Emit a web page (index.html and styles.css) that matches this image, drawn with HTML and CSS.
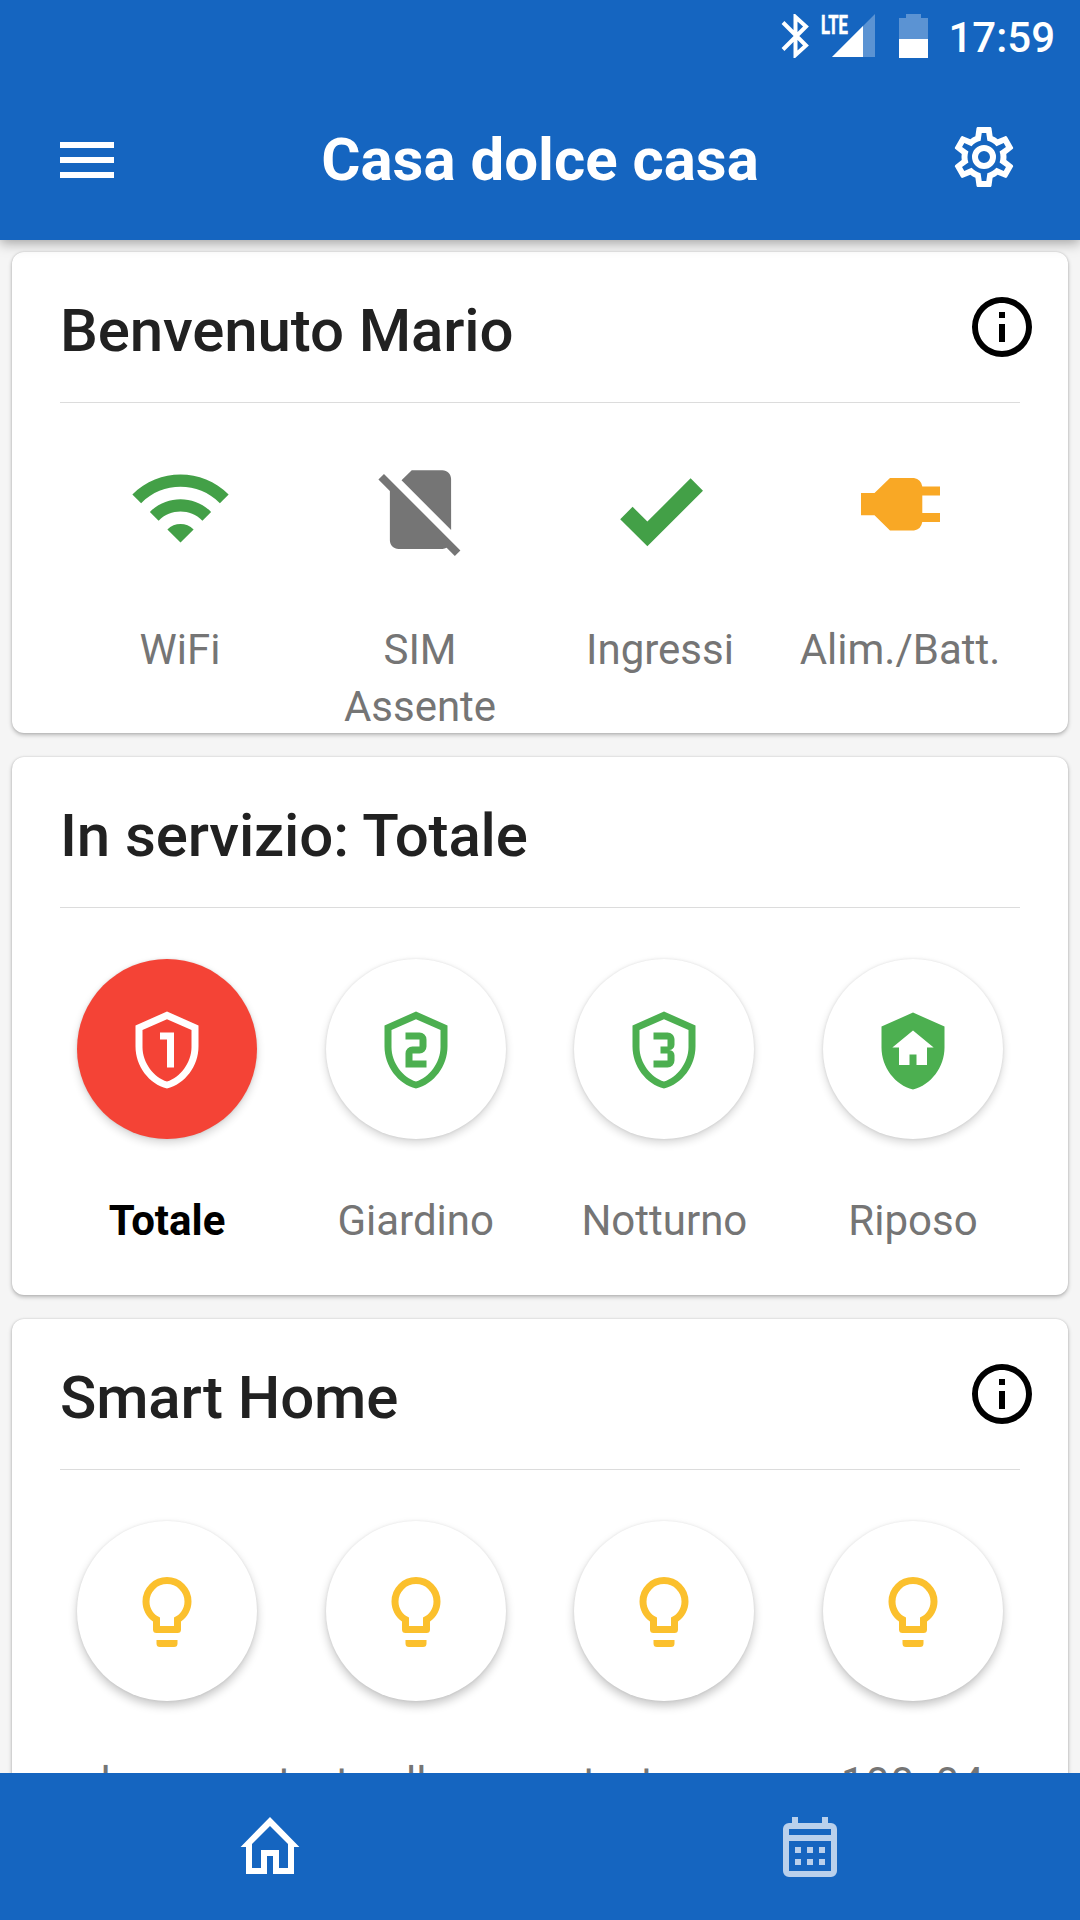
FILE: index.html
```html
<!DOCTYPE html>
<html lang="it">
<head>
<meta charset="utf-8">
<title>Casa dolce casa</title>
<link rel="stylesheet" href="styles.css">
</head>
<body>
<svg class="defs" aria-hidden="true">
  <symbol id="shield" viewBox="0 0 24 24"><path d="M21,11C21,16.55 17.16,21.74 12,23C6.84,21.74 3,16.55 3,11V5L12,1L21,5V11M12,21C15.75,20 19,15.54 19,11.22V6.3L12,3.18L5,6.3V11.22C5,15.54 8.25,20 12,21Z"/></symbol>
  <symbol id="info" viewBox="0 0 24 24"><path d="M11,9H13V7H11M12,20C7.59,20 4,16.41 4,12C4,7.59 7.59,4 12,4C16.41,4 20,7.59 20,12C20,16.41 16.41,20 12,20M12,2A10,10 0 0,0 2,12A10,10 0 0,0 12,22A10,10 0 0,0 22,12A10,10 0 0,0 12,2M11,17H13V11H11V17Z"/></symbol>
  <symbol id="bulb" viewBox="0 0 24 24"><path d="M12,2A7,7 0 0,1 19,9C19,11.38 17.81,13.47 16,14.74V17A1,1 0 0,1 15,18H9A1,1 0 0,1 8,17V14.74C6.19,13.47 5,11.38 5,9A7,7 0 0,1 12,2M9,21V20H15V21A1,1 0 0,1 14,22H10A1,1 0 0,1 9,21M12,4A5,5 0 0,0 7,9C7,11.05 8.23,12.81 10,13.58V16H14V13.58C15.77,12.81 17,11.05 17,9A5,5 0 0,0 12,4Z"/></symbol>
</svg>
<div class="screen">
  <header class="appbar">
    <div class="statusbar">
      <svg class="bluetooth" viewBox="0 0 28 44"><path d="M2 8.5L25 31.5L14.5 41V3L25 12.500L2 35.500" fill="none" stroke="#fff" stroke-width="4"/></svg>
      <div class="signal">
        <span class="lte">LTE</span>
        <svg class="wedge" viewBox="0 0 43 43"><path d="M43 0V43H0Z" fill="#fff" opacity=".3"/><path d="M31 12V43H0Z" fill="#fff"/></svg>
      </div>
      <svg class="battery" viewBox="0 0 29 44"><path d="M7 0H22V4H29V25H0V4H7Z" fill="#fff" opacity=".3"/><path d="M0 25H29V44H0Z" fill="#fff"/></svg>
      <span class="clock">17:59</span>
    </div>
    <div class="toolbar">
      <svg class="icon menu" viewBox="0 0 24 24"><path d="M3,6H21V8H3V6M3,11H21V13H3V11M3,16H21V18H3V16Z"/></svg>
      <h1 class="apptitle">Casa dolce casa</h1>
      <svg class="icon gear" viewBox="0 0 24 24"><path d="M12,8A4,4 0 0,1 16,12A4,4 0 0,1 12,16A4,4 0 0,1 8,12A4,4 0 0,1 12,8M12,10A2,2 0 0,0 10,12A2,2 0 0,0 12,14A2,2 0 0,0 14,12A2,2 0 0,0 12,10M10,22C9.75,22 9.54,21.82 9.5,21.58L9.13,18.93C8.5,18.68 7.96,18.34 7.44,17.94L4.95,18.95C4.73,19.03 4.46,18.95 4.34,18.73L2.34,15.27C2.21,15.05 2.27,14.78 2.46,14.63L4.57,12.97L4.5,12L4.57,11L2.46,9.37C2.27,9.22 2.21,8.95 2.34,8.73L4.34,5.27C4.46,5.05 4.73,4.96 4.95,5.05L7.44,6.05C7.96,5.66 8.5,5.32 9.13,5.07L9.5,2.42C9.54,2.18 9.75,2 10,2H14C14.25,2 14.46,2.18 14.5,2.42L14.87,5.07C15.5,5.32 16.04,5.66 16.56,6.05L19.05,5.05C19.27,4.96 19.54,5.05 19.66,5.27L21.66,8.73C21.79,8.95 21.73,9.22 21.54,9.37L19.43,11L19.5,12L19.43,13L21.54,14.63C21.73,14.78 21.79,15.05 21.66,15.27L19.66,18.73C19.54,18.95 19.27,19.04 19.05,18.95L16.56,17.95C16.04,18.34 15.5,18.68 14.87,18.93L14.5,21.58C14.46,21.82 14.25,22 14,22H10M11.25,4L10.88,6.61C9.68,6.86 8.62,7.5 7.85,8.39L5.44,7.35L4.69,8.65L6.8,10.2C6.4,11.37 6.4,12.64 6.8,13.8L4.68,15.36L5.43,16.66L7.86,15.62C8.63,16.5 9.68,17.14 10.87,17.38L11.24,20H12.76L13.13,17.39C14.32,17.14 15.37,16.5 16.14,15.62L18.57,16.66L19.32,15.36L17.2,13.81C17.6,12.64 17.6,11.37 17.2,10.2L19.31,8.65L18.56,7.35L16.15,8.39C15.38,7.5 14.32,6.86 13.12,6.62L12.75,4H11.25Z"/></svg>
    </div>
  </header>

  <main class="content">
    <section class="card card-status">
      <div class="card-head"><h2>Benvenuto Mario</h2><svg class="icon info"><use href="#info"/></svg></div>
      <div class="status-grid">
        <div class="status">
          <svg class="status-icon green" viewBox="0 0.450 24 24"><path d="M1 9l2 2c4.97-4.97 13.03-4.97 18 0l2-2C16.93 2.93 7.08 2.93 1 9zm8 8l3 3 3-3c-1.65-1.66-4.34-1.66-6 0zm-4-4l2 2c2.76-2.76 7.24-2.76 10 0l2-2C15.14 9.14 8.87 9.14 5 13z"/></svg>
          <p>WiFi</p>
        </div>
        <div class="status">
          <svg class="status-icon grey" viewBox="0 0 24 24"><path d="M18.99 5c0-1.1-.89-2-1.99-2h-7L7.66 5.34 19 16.68 18.99 5zM3.65 3.88L2.38 5.15 5 7.77V19c0 1.1.9 2 2 2h10.01c.35 0 .67-.1.96-.26l1.88 1.88 1.27-1.27L3.65 3.88z"/></svg>
          <p>SIM<br>Assente</p>
        </div>
        <div class="status">
          <svg class="status-icon green" viewBox="0 0 24 24"><path d="M9,20.42L2.79,14.21L5.62,11.38L9,14.77L18.88,4.88L21.71,7.71L9,20.42Z"/></svg>
          <p>Ingressi</p>
        </div>
        <div class="status">
          <svg class="status-icon orange" viewBox="0 0 105 105"><path d="M13 36H26.500L42 21H66Q73 22 74.300 29.500H92V38.500H74.300V56H92V65H74.300Q73 72.500 66 73.500H42L26.500 58.200H13Z"/></svg>
          <p>Alim./Batt.</p>
        </div>
      </div>
    </section>

    <section class="card card-service">
      <div class="card-head"><h2>In servizio: Totale</h2></div>
      <div class="round-grid">
        <div class="round active">
          <span class="disc"><svg class="disc-icon" viewBox="0 0 24 24"><use href="#shield"/><path d="M10,7V9H12V17H14V7H10Z"/></svg></span>
          <p>Totale</p>
        </div>
        <div class="round">
          <span class="disc"><svg class="disc-icon" viewBox="0 0 24 24"><use href="#shield"/><path d="M9,7V9H13V11H11A2,2 0 0,0 9,13V17H15V15H11V13H13A2,2 0 0,0 15,11V9A2,2 0 0,0 13,7H9Z"/></svg></span>
          <p>Giardino</p>
        </div>
        <div class="round">
          <span class="disc"><svg class="disc-icon" viewBox="0 0 24 24"><use href="#shield"/><path d="M15,15V13.5A1.5,1.5 0 0,0 13.5,12A1.5,1.5 0 0,0 15,10.5V9C15,7.89 14.1,7 13,7H9V9H13V11H11V13H13V15H9V17H13A2,2 0 0,0 15,15"/></svg></span>
          <p>Notturno</p>
        </div>
        <div class="round">
          <span class="disc"><svg class="disc-icon" viewBox="0 -0.300 24 24"><path fill-rule="evenodd" d="M12,1L3,5V11C3,16.55 6.84,21.74 12,23C17.16,21.74 21,16.55 21,11V5L12,1M12,6.100L6.100,11H8V16H11V13H13V16H16V11H17.900Z"/></svg></span>
          <p>Riposo</p>
        </div>
      </div>
    </section>

    <section class="card card-smart">
      <div class="card-head"><h2>Smart Home</h2><svg class="icon info"><use href="#info"/></svg></div>
      <div class="round-grid lights">
        <div class="round"><span class="disc"><svg class="disc-icon"><use href="#bulb"/></svg></span><p>luce ca</p></div>
        <div class="round"><span class="disc"><svg class="disc-icon"><use href="#bulb"/></svg></span><p>test gallo verra</p></div>
        <div class="round"><span class="disc"><svg class="disc-icon"><use href="#bulb"/></svg></span><p>test cam</p></div>
        <div class="round"><span class="disc"><svg class="disc-icon"><use href="#bulb"/></svg></span><p class="code">100_04</p></div>
      </div>
    </section>
  </main>

  <nav class="tabs">
    <a class="tab"><svg class="icon" viewBox="0 0 24 24"><path d="M12,2L2.200,12H4V21H11V15H13V21H20V12H21.800L12,2M12,5L18,11V19H15V13H9V19H6V11Z"/></svg></a>
    <a class="tab inactive"><svg class="icon" viewBox="0 0 24 24"><path fill-rule="evenodd" d="M6,2H8V4H16V2H18V4H19A2,2 0 0,1 21,6V20A2,2 0 0,1 19,22H5A2,2 0 0,1 3,20V6A2,2 0 0,1 5,4H6ZM5,6V8H19V6ZM5,10V20H19V10ZM7,12H9V14H7ZM11,12H13V14H11ZM15,12H17V14H15ZM7,16H9V18H7ZM11,16H13V18H11ZM15,16H17V18H15Z"/></svg></a>
  </nav>
</div>
</body>
</html>
```
FILE: styles.css
```css
* { box-sizing: border-box; }
body { margin: 0; background: #f5f5f5; font-family: Roboto, "Noto Sans", sans-serif; }
h1, h2, p { margin: 0; }
svg { display: block; fill: currentColor; flex: none; }
.defs { display: none; }

.screen { width: 1080px; height: 1920px; display: flex; flex-direction: column; overflow: hidden; }

.appbar {
  flex: none; height: 240px; background: #1565c0; color: #fff; z-index: 1;
  position: relative; box-shadow: 0 3px 12px rgba(0,0,0,.35);
}
.statusbar { height: 72px; display: flex; justify-content: flex-end; align-items: flex-start; padding-right: 25px; }
.bluetooth { width: 28px; height: 44px; margin: 14px 12px 0 0; }
.signal { width: 54px; height: 43px; margin: 14px 24px 0 0; display: flex; align-items: flex-start; }
.lte { width: 11px; font-size: 26px; font-weight: 700; line-height: 22px; transform: scaleX(.64); transform-origin: left; -webkit-text-stroke: .6px #fff; }
.lte { transform-origin: 0 0; }
.wedge { width: 43px; height: 43px; }
.battery { width: 29px; height: 44px; margin: 14px 20px 0 0; }
.clock { font-size: 42px; font-weight: 500; line-height: 49px; margin-top: 13px; }

.toolbar { height: 168px; display: flex; align-items: flex-start; justify-content: space-between; padding: 0 60px 0 51px; }
.icon { width: 72px; height: 72px; }
.menu { margin-top: 52px; }
.gear { margin-top: 49px; }
.apptitle { font-size: 60px; font-weight: 700; line-height: 70px; margin: 53px 0 0 9px; }

.content { flex: 1; min-height: 0; overflow: hidden; display: flex; flex-direction: column; gap: 24px; padding: 12px 12px 0; }
.card {
  flex: none; background: #fff; border-radius: 12px; padding: 0 48px;
  box-shadow: 0 2px 4px rgba(0,0,0,.26), 0 0 2px rgba(0,0,0,.16);
}
.card-status { height: 481px; }
.card-service { height: 538px; }
.card-smart { height: 560px; }

.card-head { height: 151px; border-bottom: 1px solid #dcdcdc; display: flex; justify-content: space-between; }
.card-head h2 { font-size: 60px; font-weight: 500; line-height: 70px; margin-top: 44px; color: #212121; letter-spacing: -.13px; }
.info { margin: 39px -18px 0 0; color: #000; }

.status-grid { display: grid; grid-template-columns: repeat(4, 240px); }
.status { display: flex; flex-direction: column; align-items: center; }
.status-icon { width: 105px; height: 105px; margin-top: 54px; }
.status p { margin-top: 59px; font-size: 42px; line-height: 57px; text-align: center; color: #757575; }
.green { color: #43a047; }
.grey { color: #757575; }
.orange { color: #f9a825; }

.round-grid { display: grid; grid-template-columns: repeat(4, 248.67px); margin: 0 -17.300px; }
.round { display: flex; flex-direction: column; align-items: center; color: #757575; }
.disc {
  width: 180px; height: 180px; margin-top: 51px; border-radius: 50%; background: #fff; color: #4caf50;
  display: flex; align-items: center; justify-content: center; padding-top: 2px;
  box-shadow: 0 4px 8px rgba(0,0,0,.16), 0 0 3px rgba(0,0,0,.1);
}
.disc-icon { width: 84px; height: 84px; }
.round p { margin-top: 53px; font-size: 42px; line-height: 57px; white-space: nowrap; }
.active .disc { background: #f44336; color: #fff; }
.active p { font-weight: 700; color: #000; }
.lights .disc { color: #fbc02d; box-shadow: 0 5px 10px rgba(0,0,0,.22), 0 0 3px rgba(0,0,0,.08); }
.round .code { letter-spacing: 1.200px; }

.tabs { flex: none; height: 147px; background: #1565c0; color: #fff; display: flex; position: relative; }
.tab { flex: 1; display: flex; justify-content: center; padding-top: 38px; }
.inactive { color: #b9d0ec; }
```
